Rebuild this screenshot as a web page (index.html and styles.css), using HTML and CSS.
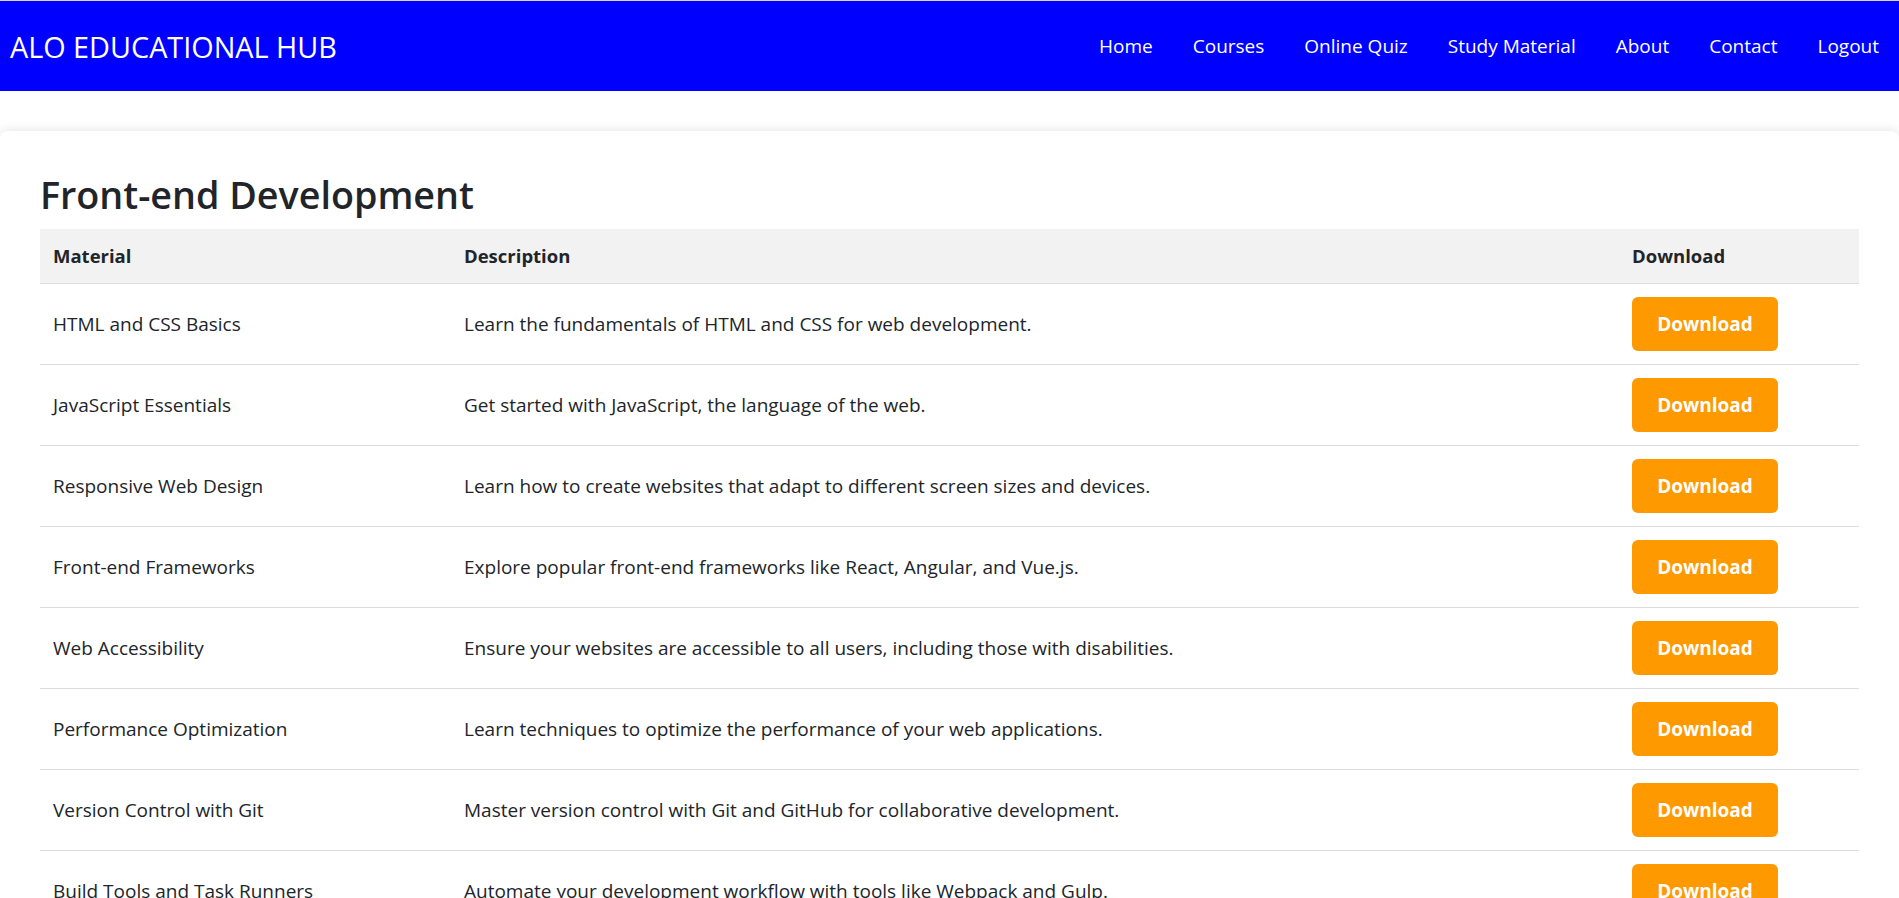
FILE: index.html
```html
<!DOCTYPE html>
<html lang="en">
<head>
<meta charset="utf-8">
<title>Study Material - ALO Educational Hub</title>
<link rel="stylesheet" href="styles.css">
</head>
<body>
<nav class="navbar">
  <a class="brand" href="#">ALO EDUCATIONAL HUB</a>
  <ul class="nav-links">
    <li><a href="#">Home</a></li>
    <li><a href="#">Courses</a></li>
    <li><a href="#">Online Quiz</a></li>
    <li><a href="#">Study Material</a></li>
    <li><a href="#">About</a></li>
    <li><a href="#">Contact</a></li>
    <li><a href="#">Logout</a></li>
  </ul>
</nav>
<main class="card">
  <h1 class="section-title">Front-end Development</h1>
  <table class="materials">
    <colgroup>
      <col class="col-material">
      <col class="col-desc">
      <col class="col-dl">
    </colgroup>
    <thead>
      <tr><th>Material</th><th>Description</th><th>Download</th></tr>
    </thead>
    <tbody>
      <tr><td>HTML and CSS Basics</td><td>Learn the fundamentals of HTML and CSS for web development.</td><td><a class="btn" href="#">Download</a></td></tr>
      <tr><td>JavaScript Essentials</td><td>Get started with JavaScript, the language of the web.</td><td><a class="btn" href="#">Download</a></td></tr>
      <tr><td>Responsive Web Design</td><td>Learn how to create websites that adapt to different screen sizes and devices.</td><td><a class="btn" href="#">Download</a></td></tr>
      <tr><td>Front-end Frameworks</td><td>Explore popular front-end frameworks like React, Angular, and Vue.js.</td><td><a class="btn" href="#">Download</a></td></tr>
      <tr><td>Web Accessibility</td><td>Ensure your websites are accessible to all users, including those with disabilities.</td><td><a class="btn" href="#">Download</a></td></tr>
      <tr><td>Performance Optimization</td><td>Learn techniques to optimize the performance of your web applications.</td><td><a class="btn" href="#">Download</a></td></tr>
      <tr><td>Version Control with Git</td><td>Master version control with Git and GitHub for collaborative development.</td><td><a class="btn" href="#">Download</a></td></tr>
      <tr><td>Build Tools and Task Runners</td><td>Automate your development workflow with tools like Webpack and Gulp.</td><td><a class="btn" href="#">Download</a></td></tr>
    </tbody>
  </table>
</main>
</body>
</html>
```

FILE: styles.css
```css
* { box-sizing: border-box; }

html, body {
  margin: 0;
  padding: 0;
}

body {
  font-family: "Open Sans", "Noto Sans", "Liberation Sans", sans-serif;
  color: #212529;
  background: #ffffff;
  border-top: 1px solid #d6d6d6;
}

.navbar {
  background: #0000ff;
  height: 90px;
  display: flex;
  align-items: center;
  justify-content: space-between;
  padding: 0 0 0 10px;
}

.brand {
  color: #ffffff;
  text-decoration: none;
  font-size: 28.8px;
  font-weight: 400;
}

.nav-links {
  list-style: none;
  margin: 0;
  padding: 0;
  display: flex;
}

.nav-links a {
  display: block;
  color: #ffffff;
  text-decoration: none;
  font-size: 19px;
  padding: 0 20px;
}

.card {
  display: block;
  margin-top: 40px;
  background: #ffffff;
  border-radius: 8px;
  box-shadow: 0 0 12px rgba(0, 0, 0, 0.12);
  padding: 40px;
}

.section-title {
  margin: 0 0 10px 0;
  font-size: 37.7px;
  font-weight: 600;
  line-height: 48px;
  color: #212529;
}

.materials {
  width: 100%;
  border-collapse: collapse;
  table-layout: fixed;
}

.col-material { width: 411px; }
.col-dl { width: 240px; }

.materials th {
  background: #f2f2f2;
  text-align: left;
  font-weight: 700;
  font-size: 18.5px;
  height: 54px;
  padding: 0 13px;
  border-bottom: 1px solid #dddddd;
}

.materials td {
  font-size: 19px;
  padding: 13px;
  height: 81px;
  vertical-align: middle;
  border-bottom: 1px solid #dddddd;
}

.btn {
  display: block;
  width: 146px;
  height: 54px;
  line-height: 54px;
  text-align: center;
  background: #ff9900;
  color: #ffffff;
  font-weight: 700;
  font-size: 19px;
  border-radius: 6px;
  text-decoration: none;
}
```
